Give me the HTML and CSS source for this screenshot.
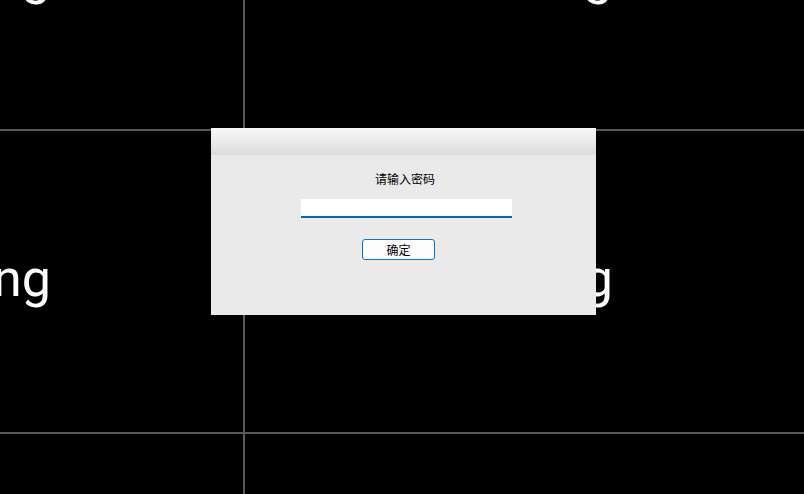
FILE: index.html
```html
<!DOCTYPE html>
<html lang="zh-CN">

<head>
    <meta charset="UTF-8">
    <meta name="viewport" content="width=device-width, initial-scale=1.0">
    <title>请输入密码</title>
    <link rel="stylesheet" href="styles.css">
</head>

<body>
    <!-- Сетка окон просмотра -->
    <div class="view-grid">
        <div class="view-cell"><span class="view-text">Loading</span></div>
        <div class="view-cell"><span class="view-text">Loading</span></div>
        <div class="view-cell"><span class="view-text">Loading</span></div>
        <div class="view-cell"><span class="view-text">Loading</span></div>
        <div class="view-cell"></div>
        <div class="view-cell"></div>
    </div>

    <!-- Окно ввода пароля поверх сетки -->
    <div class="dialog">
        <div class="dialog-title"></div>
        <div class="dialog-body">
            <div class="dialog-label">请输入密码</div>
            <input class="dialog-input" type="password">
            <button class="dialog-button">确定</button>
        </div>
    </div>
</body>

</html>
```

FILE: styles.css
```css
html, body {
    margin: 0;
    padding: 0;
    overflow: hidden;
    background: #000;
    width: 804px;
    height: 494px;
}

.view-grid {
    display: grid;
    grid-template-columns: 560px 560px;
    grid-auto-rows: 301px;
    gap: 2px;
    background: #585858;
    width: 1122px;
    margin-left: -317px; /* сетка сдвинута влево и вверх */
    margin-top: -172px;
}

.view-cell {
    background: #000;
    display: flex;
    align-items: center;
    justify-content: flex-end;
    padding-right: 192px;
}

.view-text {
    color: #fff;
    font-family: "Roboto", "Noto Sans", sans-serif;
    font-size: 52px;
    line-height: 1;
    padding-bottom: 6px;
}

.dialog {
    position: absolute;
    left: 211px;
    top: 128px;
    width: 385px;
    height: 187px;
    background: #eaeaea;
    font-family: "Noto Sans CJK SC", "Microsoft YaHei", sans-serif;
    font-size: 12px;
    color: #000;
}

.dialog-title {
    height: 27px;
    background: linear-gradient(#f8f8f8, #dcdcdc);
}

.dialog-body {
    display: flex;
    flex-direction: column;
    align-items: flex-start;
    padding-top: 15px;
}

.dialog-label {
    margin-left: 164px;
    line-height: 17px;
}

.dialog-input {
    margin: 12px 0 0 90px;
    width: 211px;
    height: 19px;
    box-sizing: border-box;
    border: none;
    border-bottom: 2px solid #0067c0;
    background: #fff;
    padding: 0 4px;
    outline: none;
}

.dialog-button {
    margin: 21px 0 0 151px;
    width: 73px;
    height: 21px;
    box-sizing: border-box;
    border: 1px solid #0078d4;
    border-radius: 3px;
    background: #fdfdfd;
    font-family: inherit;
    font-size: 12px;
    line-height: 17px;
    padding: 0;
    color: #000;
}
```
